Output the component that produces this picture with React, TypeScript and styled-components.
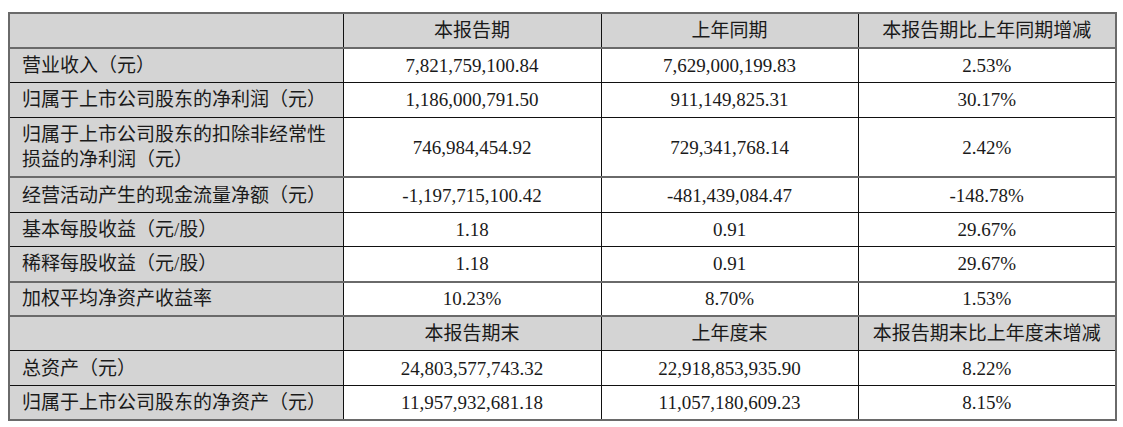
import React from "react";
import styled, { createGlobalStyle } from "styled-components";

const Global = createGlobalStyle`
  html, body { margin: 0; padding: 0; background: #ffffff; }
  body { font-family: "Liberation Serif", "Noto Sans CJK SC", serif; }
`;

const Page = styled.div`
  padding: 12px 8px 0 8px;
`;

const Table = styled.table`
  border-collapse: collapse;
  width: 1107px;
  table-layout: fixed;
  border: 2px solid #6a6a6a;
  font-family: "Liberation Serif", "Noto Sans CJK SC", serif;
  font-size: 19px;
  color: #1a1a1a;
`;

const Col = styled.col<{ $w: number }>`
  width: ${(p) => p.$w}px;
`;

const Row = styled.tr<{ $line?: "gray" | "black"; $tall?: boolean }>`
  height: ${(p) => (p.$tall ? "60.4px" : "34.7px")};
  border-top: ${(p) => (p.$line === "gray" ? "2px solid #6a6a6a" : "1px solid #111")};
`;

const Cell = styled.td<{ $shade?: boolean; $label?: boolean }>`
  padding: 0;
  padding-left: ${(p) => (p.$label ? "12px" : "0")};
  text-align: ${(p) => (p.$label ? "left" : "center")};
  vertical-align: middle;
  background: ${(p) => (p.$shade ? "#d4d4d4" : "#ffffff")};
  border-left: 1px solid #111;
  border-right: 1px solid #111;
  line-height: 25px;
  white-space: nowrap;
`;

const LabelLine = styled.div`
  display: block;
`;

type Line = "gray" | "black";

const rows: { label: string[]; values: string[]; header?: boolean; line?: Line; tall?: boolean }[] = [
  { label: [""], values: ["本报告期", "上年同期", "本报告期比上年同期增减"], header: true },
  { label: ["营业收入（元）"], values: ["7,821,759,100.84", "7,629,000,199.83", "2.53%"], line: "gray" },
  { label: ["归属于上市公司股东的净利润（元）"], values: ["1,186,000,791.50", "911,149,825.31", "30.17%"] },
  {
    label: ["归属于上市公司股东的扣除非经常性", "损益的净利润（元）"],
    values: ["746,984,454.92", "729,341,768.14", "2.42%"],
    tall: true,
  },
  { label: ["经营活动产生的现金流量净额（元）"], values: ["-1,197,715,100.42", "-481,439,084.47", "-148.78%"], line: "gray" },
  { label: ["基本每股收益（元/股）"], values: ["1.18", "0.91", "29.67%"] },
  { label: ["稀释每股收益（元/股）"], values: ["1.18", "0.91", "29.67%"] },
  { label: ["加权平均净资产收益率"], values: ["10.23%", "8.70%", "1.53%"], line: "gray" },
  { label: [""], values: ["本报告期末", "上年度末", "本报告期末比上年度末增减"], header: true, line: "gray" },
  { label: ["总资产（元）"], values: ["24,803,577,743.32", "22,918,853,935.90", "8.22%"] },
  { label: ["归属于上市公司股东的净资产（元）"], values: ["11,957,932,681.18", "11,057,180,609.23", "8.15%"] },
];

const widths = [334, 258, 257, 258];

export default function App() {
  return (
    <Page>
      <Global />
      <Table>
        <colgroup>
          {widths.map((w, i) => (
            <Col key={i} $w={w} />
          ))}
        </colgroup>
        <tbody>
          {rows.map((r, i) => (
            <Row key={i} $line={r.line ?? "black"} $tall={r.tall}>
              <Cell $shade $label>
                {r.label.map((l, j) => (
                  <LabelLine key={j}>{l}</LabelLine>
                ))}
              </Cell>
              {r.values.map((v, j) => (
                <Cell key={j} $shade={r.header}>
                  {v}
                </Cell>
              ))}
            </Row>
          ))}
        </tbody>
      </Table>
    </Page>
  );
}
